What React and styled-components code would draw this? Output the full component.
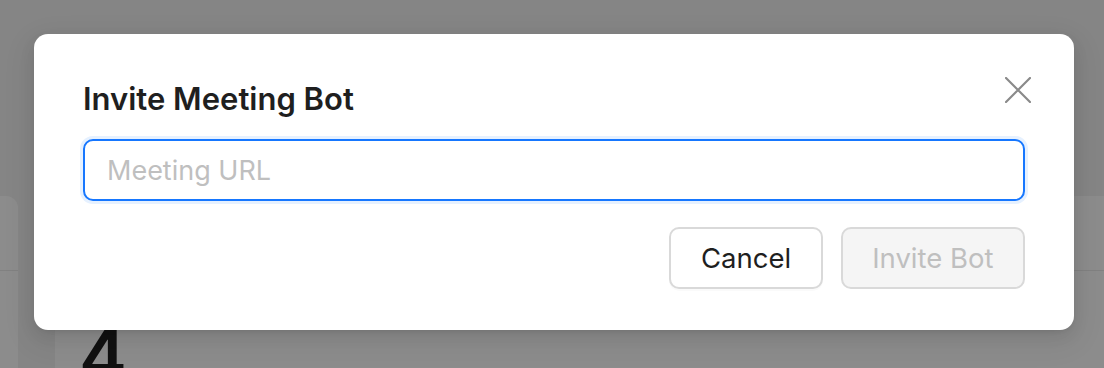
import React from "react";
import { styled, createGlobalStyle } from "styled-components";

const GlobalStyle = createGlobalStyle`
  html, body {
    margin: 0;
    padding: 0;
    background: #f2f2f2;
    font-family: Inter, "Noto Sans", "Liberation Sans", sans-serif;
  }
  * { box-sizing: border-box; }
`;

const Page = styled.div`
  position: relative;
  width: 1104px;
  height: 368px;
  overflow: hidden;
  background: #f2f2f2;
`;

const Board = styled.div`
  display: grid;
  grid-template-columns: 18px 1fr;
  gap: 37px;
  padding-top: 196px;
  height: 100%;
`;

const Card = styled.div`
  background: #fff;
  border-radius: ${(p) => (p.$side ? "0 12px 0 0" : "12px 0 0 0")};
  display: flex;
  flex-direction: column;
`;

const CardHeader = styled.div`
  height: 75px;
  border-bottom: 1px solid #ececec;
`;

const BigNumber = styled.div`
  padding: 48px 0 0 24px;
  font-size: 72px;
  font-weight: 600;
  line-height: 1;
  color: #1f1f1f;
`;

const Overlay = styled.div`
  position: absolute;
  inset: 0;
  background: rgba(0, 0, 0, 0.45);
`;

const Modal = styled.div`
  position: absolute;
  left: 34px;
  top: 34px;
  width: 1040px;
  background: #fff;
  border-radius: 14px;
  padding: 45px 49px 41px;
  box-shadow: 0 6px 16px rgba(0, 0, 0, 0.08), 0 3px 6px -4px rgba(0, 0, 0, 0.12),
    0 9px 28px 8px rgba(0, 0, 0, 0.05);
  display: flex;
  flex-direction: column;
`;

const Title = styled.h2`
  margin: 0;
  font-size: 31px;
  line-height: 40px;
  font-weight: 600;
  color: #1f1f1f;
`;

const CloseButton = styled.button`
  position: absolute;
  top: 38px;
  right: 38px;
  width: 36px;
  height: 36px;
  padding: 0;
  border: none;
  background: transparent;
  display: flex;
  align-items: center;
  justify-content: center;
  cursor: pointer;
`;

const UrlInput = styled.input`
  margin-top: 20px;
  height: 62px;
  width: 100%;
  border: 2px solid #1677ff;
  border-radius: 10px;
  box-shadow: 0 0 0 3px #e6f1ff;
  padding: 0 22px;
  font-family: inherit;
  font-size: 27px;
  color: #1f1f1f;
  outline: none;
  &::placeholder {
    color: #bfbfbf;
  }
`;

const Actions = styled.div`
  margin-top: 26px;
  display: flex;
  justify-content: flex-end;
  gap: 18px;
`;

const Button = styled.button`
  height: 62px;
  padding: 0 29.5px;
  border-radius: 10px;
  border: 2px solid #d9d9d9;
  font-family: inherit;
  font-size: 27.5px;
  background: ${(p) => (p.disabled ? "#f5f5f5" : "#fff")};
  color: ${(p) => (p.disabled ? "#bfbfbf" : "#1f1f1f")};
  box-shadow: ${(p) => (p.disabled ? "none" : "0 2px 0 rgba(0,0,0,0.02)")};
`;

export default function App() {
  return (
    <Page>
      <GlobalStyle />
      <Board>
        <Card $side>
          <CardHeader />
        </Card>
        <Card>
          <CardHeader />
          <BigNumber>4</BigNumber>
        </Card>
      </Board>
      <Overlay />
      <Modal>
        <Title>Invite Meeting Bot</Title>
        <CloseButton aria-label="Close">
          <svg width="26" height="26" viewBox="0 0 26 26" fill="none">
            <path d="M1 1L25 25M25 1L1 25" stroke="#8a8a8a" strokeWidth="2.2" strokeLinecap="round" />
          </svg>
        </CloseButton>
        <UrlInput placeholder="Meeting URL" />
        <Actions>
          <Button>Cancel</Button>
          <Button disabled>Invite Bot</Button>
        </Actions>
      </Modal>
    </Page>
  );
}
